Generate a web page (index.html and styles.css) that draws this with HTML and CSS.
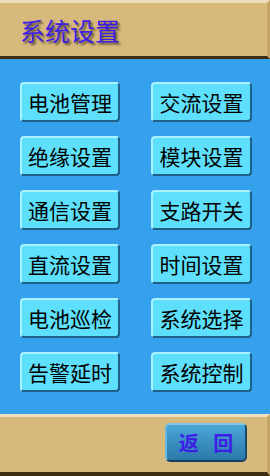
FILE: index.html
```html
<!DOCTYPE html>
<html lang="zh">
<head>
  <meta charset="UTF-8">
  <title>系统设置</title>
  <meta name="viewport" content="width=device-width, initial-scale=1.0">
  <link rel="stylesheet" href="styles.css">
</head>
<body>
  <div class="header">
    <span class="title">系统设置</span>
  </div>

  <!-- Settings menu -->
  <div class="menu">
    <button class="menu-btn">电池管理</button>
    <button class="menu-btn">交流设置</button>
    <button class="menu-btn">绝缘设置</button>
    <button class="menu-btn">模块设置</button>
    <button class="menu-btn">通信设置</button>
    <button class="menu-btn">支路开关</button>
    <button class="menu-btn">直流设置</button>
    <button class="menu-btn">时间设置</button>
    <button class="menu-btn">电池巡检</button>
    <button class="menu-btn">系统选择</button>
    <button class="menu-btn">告警延时</button>
    <button class="menu-btn">系统控制</button>
  </div>

  <div class="footer">
    <button class="back-btn">返 回</button>
  </div>
</body>
</html>
```

FILE: styles.css
```css
body {
  margin: 0;
  width: 270px;
  height: 476px;
  display: flex;
  flex-direction: column;
  overflow: hidden;
  font-family: "Noto Sans CJK SC", "Noto Sans", sans-serif;
}
.header {
  box-sizing: border-box;
  height: 59px;
  background: #d7b97c;
  border-top: 3px solid #eedfba;
  border-right: 3px solid #c4a468;
  border-bottom: 3px solid #3e2e14;
  display: flex;
  align-items: center;
  padding-left: 20px;
}
.title {
  font-size: 25px;
  color: #3d1ee6;
  text-shadow: 2px 2px 2px #6a5434;
  line-height: 1;
  margin-top: 2px;
}
.menu {
  flex: 1;
  background: #35a0ec;
  display: grid;
  grid-template-columns: 100px 101px;
  grid-auto-rows: 40px;
  column-gap: 31px;
  row-gap: 14px;
  padding: 23px 0 0 20px;
}
.menu-btn {
  box-sizing: border-box;
  margin: 0;
  padding: 0;
  background: #5ee0fc;
  border-top: 2px solid #a8f2ff;
  border-left: 2px solid #a8f2ff;
  border-right: 2px solid #1e6088;
  border-bottom: 2px solid #1e6088;
  border-radius: 4px;
  font-family: inherit;
  font-size: 21px;
  color: #000;
  line-height: 1;
}
.footer {
  box-sizing: border-box;
  height: 62px;
  background: #d7b97c;
  border-top: 3px solid #f0e0bb;
  border-right: 3px solid #c4a468;
  border-bottom: 4px solid #3e2e14;
  display: flex;
  justify-content: flex-end;
  padding: 6px 20px 0 0;
}
.back-btn {
  box-sizing: border-box;
  width: 82px;
  height: 39px;
  margin: 0;
  padding: 0;
  background: linear-gradient(#4aa6d8, #2b79aa);
  border-top: 2px solid #7cc4ea;
  border-left: 2px solid #6ab8e2;
  border-right: 2px solid #1a4a6c;
  border-bottom: 2px solid #15405e;
  border-radius: 5px;
  font-family: inherit;
  font-size: 20px;
  font-weight: bold;
  color: #3d1ee6;
  word-spacing: 10px;
  line-height: 1;
}
```
